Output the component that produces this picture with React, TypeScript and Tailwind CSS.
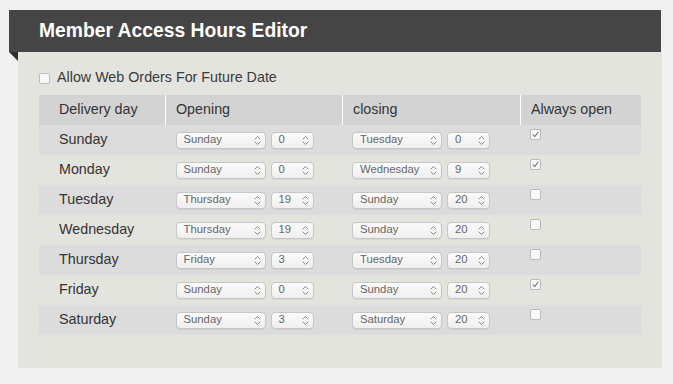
import React from "react";

type Row = {
  day: string;
  openDay: string;
  openHour: string;
  closeDay: string;
  closeHour: string;
  always: boolean;
};

const rows: Row[] = [
  { day: "Sunday", openDay: "Sunday", openHour: "0", closeDay: "Tuesday", closeHour: "0", always: true },
  { day: "Monday", openDay: "Sunday", openHour: "0", closeDay: "Wednesday", closeHour: "9", always: true },
  { day: "Tuesday", openDay: "Thursday", openHour: "19", closeDay: "Sunday", closeHour: "20", always: false },
  { day: "Wednesday", openDay: "Thursday", openHour: "19", closeDay: "Sunday", closeHour: "20", always: false },
  { day: "Thursday", openDay: "Friday", openHour: "3", closeDay: "Tuesday", closeHour: "20", always: false },
  { day: "Friday", openDay: "Sunday", openHour: "0", closeDay: "Sunday", closeHour: "20", always: true },
  { day: "Saturday", openDay: "Sunday", openHour: "3", closeDay: "Saturday", closeHour: "20", always: false },
];

function Chevrons() {
  return (
    <svg width="7" height="11" viewBox="0 0 7 11" fill="none" className="shrink-0">
      <path d="M1 4 L3.5 1.5 L6 4" stroke="#8a8a8a" strokeWidth="1" strokeLinecap="round" strokeLinejoin="round" />
      <path d="M1 7 L3.5 9.5 L6 7" stroke="#8a8a8a" strokeWidth="1" strokeLinecap="round" strokeLinejoin="round" />
    </svg>
  );
}

function Select({ value, wide }: { value: string; wide?: boolean }) {
  return (
    <div
      className={`${wide ? "w-[90px]" : "w-[43px]"} h-[17px] flex items-center justify-between pl-[7px] pr-[4px] rounded-[4px] border border-[#c6c6c6] bg-gradient-to-b from-[#fbfbfb] to-[#efefef] shadow-[0_1px_0_rgba(0,0,0,0.05)] text-[11.3px] leading-none text-[#666]`}
    >
      <span>{value}</span>
      <Chevrons />
    </div>
  );
}

function Check({ checked }: { checked: boolean }) {
  return (
    <div className="w-[11px] h-[11px] rounded-[2px] border border-[#b9b9b9] bg-[#f9f9f9] flex items-center justify-center">
      {checked && (
        <svg width="9" height="9" viewBox="0 0 9 9" fill="none">
          <path d="M2 4.8 L3.8 6.6 L7 2.2" stroke="#777" strokeWidth="1.1" strokeLinecap="round" strokeLinejoin="round" />
        </svg>
      )}
    </div>
  );
}

export default function App() {
  return (
    <div
      className="w-[673px] h-[384px] bg-[#f1f1f1] pt-[10px] pl-[9px]"
      style={{ fontFamily: '"Helvetica Neue", Helvetica, "Liberation Sans", Arial, sans-serif' }}
    >
      <div className="w-[652px] h-[42px] bg-[#454545] flex items-center pl-[30px]">
        <span className="text-white font-bold text-[19.3px] leading-none pb-[1px]">Member Access Hours Editor</span>
      </div>
      <div className="flex">
        <svg width="9" height="9" viewBox="0 0 9 9" className="shrink-0">
          <polygon points="0,0 9,0 9,9" fill="#2e2e2e" />
        </svg>
        <div className="w-[644px] h-[316px] bg-[#e4e4df] pt-[16px] px-[21px]">
          <div className="h-[20px] flex items-center gap-[7px] mb-[7px]">
            <div className="w-[11px] h-[11px] rounded-[2px] border border-[#bdbdbd] bg-[#f8f8f8]" />
            <span className="text-[14.3px] text-[#3a3a3a]">Allow Web Orders For Future Date</span>
          </div>
          <div className="w-[602px]">
            <div className="grid grid-cols-[126px_177px_178px_121px] h-[30px] bg-[#d3d3d3] text-[14.3px] text-[#333]">
              <div className="flex items-center pl-[20px]">Delivery day</div>
              <div className="flex items-center pl-[10px] border-l border-white">Opening</div>
              <div className="flex items-center pl-[10px] border-l border-white">closing</div>
              <div className="flex items-center pl-[10px] border-l border-white">Always open</div>
            </div>
            {rows.map((r, i) => (
              <div
                key={r.day}
                className={`grid grid-cols-[126px_177px_178px_121px] h-[30px] text-[14.3px] text-[#333] ${i % 2 === 0 ? "bg-[#dcdcdc]" : "bg-[#e4e4df]"}`}
              >
                <div className="flex items-center pl-[20px] pb-[1px]">{r.day}</div>
                <div className="flex items-center gap-[5px] pl-[10.5px]">
                  <Select value={r.openDay} wide />
                  <Select value={r.openHour} />
                </div>
                <div className="flex items-center gap-[5px] pl-[10px]">
                  <Select value={r.closeDay} wide />
                  <Select value={r.closeHour} />
                </div>
                <div className="pl-[10px] pt-[4px]">
                  <Check checked={r.always} />
                </div>
              </div>
            ))}
          </div>
        </div>
      </div>
    </div>
  );
}
